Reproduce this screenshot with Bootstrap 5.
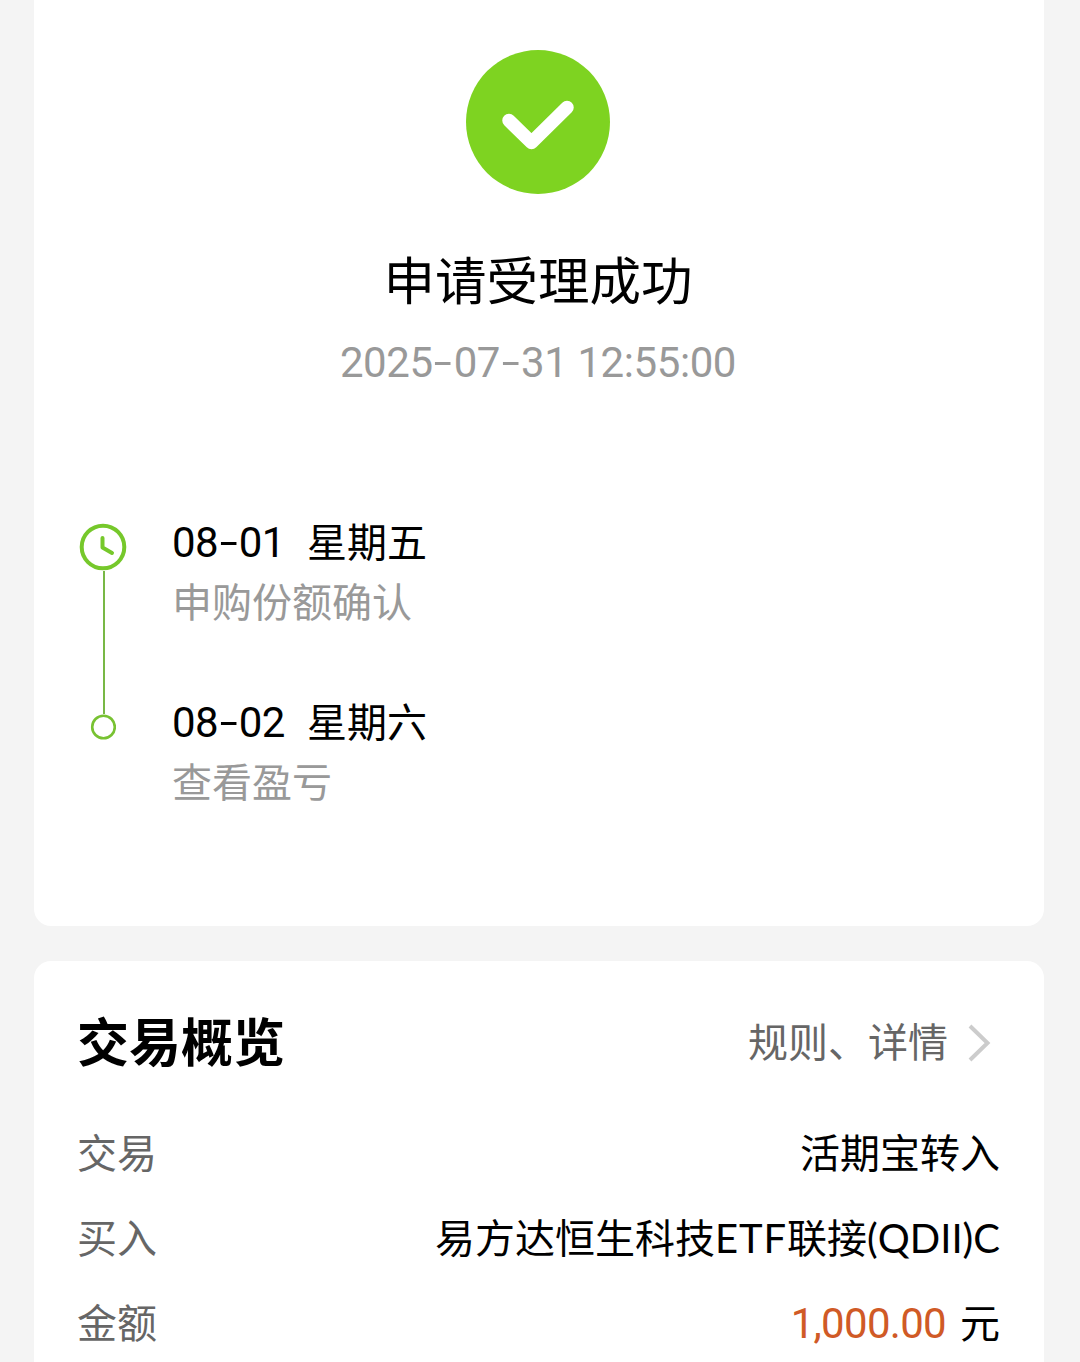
<!DOCTYPE html>
<html lang="zh-CN">
<head>
<meta charset="utf-8">
<meta name="viewport" content="width=device-width, initial-scale=1">
<title>申请受理成功</title>
<link href="https://cdn.jsdelivr.net/npm/bootstrap@5.3.0/dist/css/bootstrap.min.css" rel="stylesheet">
<style>
body{background:#f4f4f4;color:#000;font-family:"Noto Sans CJK SC",sans-serif;font-size:40px;line-height:60px;overflow:hidden;height:1362px}
.page-wrap{padding:0 36px 0 34px;gap:35px;height:1362px}
.panel{border:0;border-radius:17px;color:#000;background:#fff}
.panel-result{height:926px;flex:none;border-top-left-radius:0;border-top-right-radius:0;padding:49px 45px 0 43px}
.panel-overview{height:420px;flex:none;padding:42px 44px 0 43px}
.result-title{font-size:51.5px;line-height:72px;margin:47px 0 0;font-weight:400}
.num{font-family:Roboto,"Noto Sans CJK SC",sans-serif}
.latin{font-family:Lato,"Noto Sans CJK SC",sans-serif}
.latin-wide{letter-spacing:.9px}
.stamp{font-size:42px;line-height:60px;margin-top:19px;color:#999;letter-spacing:-.42px;white-space:pre}
.dash{display:inline-block;width:21px;text-align:center;letter-spacing:0}
.dash b{display:inline-block;font-weight:400;transform:scale(1.55,.95)}
.timeline{margin-top:117px}
.rail{width:50px;padding-top:13px;margin-left:1px}
.stem{width:2px;height:143px;background:#78b845;margin-left:1px}
.steps{margin-left:44px;gap:60px}
.step-date{height:60px;white-space:nowrap}
.step-date .num{font-size:42px;letter-spacing:-.7px;width:135px;padding-top:3px}
.muted{color:#999}
.soft{color:#666}
.overview-title{font-size:52px;line-height:74px;font-weight:700;margin:0}
.chevron{margin:6px -1px 0 17px}
.pair{height:60px}
.pairs{gap:25px;margin-top:44px}
.amount{color:#d05a26;font-size:42px;letter-spacing:-.7px;margin-right:14px}
</style>
</head>
<body>
<main class="page-wrap d-flex flex-column">
  <section class="card panel panel-result">
    <div class="d-flex flex-column align-items-center">
      <svg width="146" height="146" viewBox="0 0 146 146"><circle cx="73" cy="73" r="72" fill="#7ed321"/><path d="M44 71.500L66.500 93.500L102 58.500" fill="none" stroke="#fff" stroke-width="13.500" stroke-linecap="round" stroke-linejoin="round"/></svg>
      <h1 class="result-title">申请受理成功</h1>
      <div class="stamp num">2025<span class="dash"><b>-</b></span>07<span class="dash"><b>-</b></span>31 12:55:00</div>
    </div>
    <div class="timeline d-flex">
      <div class="rail d-flex flex-column align-items-center">
        <svg width="48" height="48" viewBox="0 0 48 48" fill="none" stroke="#76c82b"><circle cx="24" cy="24" r="21.300" stroke-width="4"/><path d="M23.500 15V24.500L33 30" stroke-width="4" stroke-linecap="round" stroke-linejoin="round"/></svg>
        <div class="stem"></div>
        <svg width="26" height="26" viewBox="0 0 26 26"><circle cx="13.500" cy="13" r="11.300" fill="#fff" stroke="#78c232" stroke-width="2.600"/></svg>
      </div>
      <div class="steps d-flex flex-column">
        <div>
          <div class="step-date d-flex"><span class="num">08<span class="dash"><b>-</b></span>01</span><span>星期五</span></div>
          <div class="muted">申购份额确认</div>
        </div>
        <div>
          <div class="step-date d-flex"><span class="num">08<span class="dash"><b>-</b></span>02</span><span>星期六</span></div>
          <div class="muted">查看盈亏</div>
        </div>
      </div>
    </div>
  </section>
  <section class="card panel panel-overview">
    <div class="d-flex justify-content-between align-items-center">
      <h2 class="overview-title">交易概览</h2>
      <div class="soft d-flex align-items-center"><span>规则、详情</span>
        <svg class="chevron" width="36" height="44" viewBox="0 0 36 44"><path d="M5 5L22.500 22L5 39" fill="none" stroke="#ccc" stroke-width="4"/></svg>
      </div>
    </div>
    <div class="pairs d-flex flex-column">
      <div class="pair d-flex justify-content-between"><span class="soft">交易</span><span>活期宝转入</span></div>
      <div class="pair d-flex justify-content-between"><span class="soft">买入</span><span>易方达恒生科技<span class="latin latin-wide">ETF</span>联接<span class="latin">(QDII)C</span></span></div>
      <div class="pair d-flex justify-content-between"><span class="soft">金额</span><span><span class="amount num">1,000.00</span>元</span></div>
    </div>
  </section>
</main>
<script src="https://cdn.jsdelivr.net/npm/bootstrap@5.3.0/dist/js/bootstrap.bundle.min.js"></script>
</body>
</html>
